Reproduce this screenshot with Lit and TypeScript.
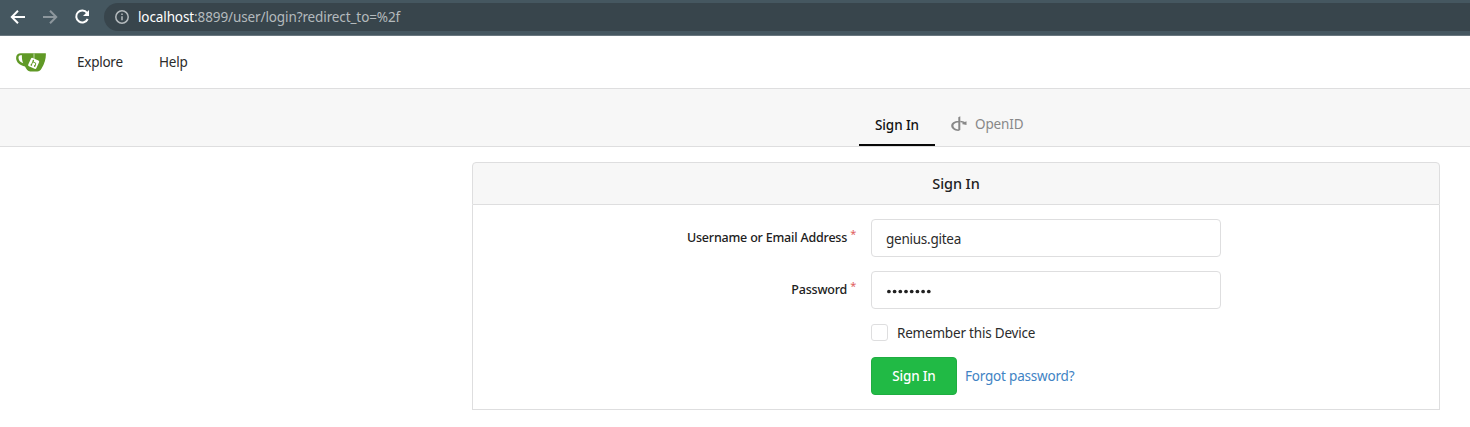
import { LitElement, html, svg, css } from "lit";
import { customElement } from "lit/decorators.js";

@customElement("app-root")
class AppRoot extends LitElement {
  static styles = css`
    :host {
      display: block;
      height: 427px;
      overflow: hidden;
      background: #fff;
      color: #2b2b2b;
      font: 13.5px/20px "Noto Sans", "Open Sans", sans-serif;
    }
    * { box-sizing: border-box; }
    svg { display: block; flex: none; }
    .browser {
      display: flex;
      align-items: flex-start;
      height: 36px;
      padding: 3px 0 0 8px;
      background: #455760;
      border-bottom: 1px solid #69777f;
    }
    .tools { width: 96px; height: 28px; }
    .address {
      display: flex;
      align-items: center;
      flex: 1;
      height: 28px;
      padding-left: 10px;
      border-radius: 14px 0 0 14px;
      background: #38454c;
      color: #b4babd;
      white-space: nowrap;
    }
    .url { margin-left: 8px; font-size: 13.5px; letter-spacing: -0.11px; }
    .host { color: #fff; }
    .nav {
      display: flex;
      height: 53px;
      padding: 16px 0 0 16px;
      border-bottom: 1px solid #dededf;
    }
    .explore { width: 82px; margin-left: 31px; letter-spacing: -0.25px; }
    .help { letter-spacing: -0.2px; }
    .tabs {
      display: flex;
      justify-content: flex-start;
      height: 58px;
      padding: 19px 0 0 859px;
      background: #f7f7f7;
      border-bottom: 1px solid #dededf;
    }
    .tab { display: flex; height: 38px; padding: 7px 16px 0; white-space: nowrap; }
    .tab.active { width: 76px; border-bottom: 2px solid #080808; color: #111; font-weight: 500; letter-spacing: -0.1px; }
    .tab.openid { height: 37px; padding-top: 6px; color: #888; gap: 8px; letter-spacing: -0.15px; }
    .panel { width: 968px; height: 248px; margin: 15px 0 0 472px; }
    .head {
      height: 43px;
      padding-top: 10px;
      border: 1px solid #dededf;
      border-radius: 4px 4px 0 0;
      background: #f7f7f7;
      color: #212121;
      text-align: center;
      font-size: 14.5px;
      font-weight: 500;
      letter-spacing: -0.1px;
    }
    .form {
      height: 205px;
      padding-top: 14px;
      border: 1px solid #dededf;
      border-top: 0;
    }
    .row { display: grid; grid-template-columns: 383px 350px; column-gap: 15px; height: 38px; margin-bottom: 14px; }
    .label { justify-self: end; display: flex; padding-top: 9px; color: #212121; font-size: 12.5px; font-weight: 500; letter-spacing: -0.2px; white-space: nowrap; }
    .star { margin: -4px 0 0 3px; color: #e06060; font-weight: 400; font-size: 11px; }
    .input { height: 38px; padding: 9px 14px; border: 1px solid #dededf; border-radius: 4px; letter-spacing: -0.25px; }
    .remember { display: flex; height: 20px; margin-left: 398px; letter-spacing: -0.2px; }
    .box { width: 17px; height: 17px; margin: 1px 9px 0 0; border: 1px solid #dededf; border-radius: 3px; }
    .actions { display: flex; margin: 14px 0 0 398px; }
    .submit {
      width: 86px;
      height: 38px;
      padding-top: 8px;
      border: 1px solid #1fad41;
      border-radius: 4px;
      background: #21ba45;
      color: #fff;
      text-align: center;
      font-weight: 500;
      letter-spacing: -0.2px;
    }
    .forgot { margin: 9px 0 0 8px; color: #4183c4; letter-spacing: -0.2px; }
  `;

  private field(label: string, input: unknown) {
    return html`<div class="row">
      <div class="label"><span>${label}</span><span class="star">*</span></div>
      ${input}
    </div>`;
  }

  render() {
    return html`
      <div class="browser">
        <svg class="tools" viewBox="0 0 96 28" fill="none" stroke-width="2">
          <path d="M17 14H4.500M10 7.800 3.800 14l6.200 6.200" stroke="#fff" />
          <path d="M35 14h12.500M42 7.800 48.200 14l-6.200 6.200" stroke="#8d979d" />
          <path d="M79 9.800A6 6 0 1 0 79.700 16" stroke="#fff" />
          <path d="M81 7v6h-6z" fill="#fff" />
        </svg>
        <div class="address">
          <svg width="16" height="16" viewBox="0 0 16 16" fill="none" stroke="#b4babd" stroke-width="1.500">
            <circle cx="8" cy="8" r="6.200" />
            <path d="M8 7.200v4M8 4.600v1.500" />
          </svg>
          <span class="url"><span class="host">localhost</span>:8899/user/login?redirect_to=%2f</span>
        </div>
      </div>
      <div class="nav">
        <svg class="logo" width="30" height="20" viewBox="0 0 30 20">
          <path d="M5 1.200h24.800c.4 3.600-.6 9.600-4.400 15.600-1.200 2-2.200 2.700-4.200 2.700h-7c-2.300 0-4-2.500-5.200-5C4 13.400.2 10.300.1 6.200 0 3.300 1.600 1.200 5 1.200zM4.500 3.200C3.100 3.300 2.400 4.400 2.500 6.100c.2 2.400 1.700 4.300 4.700 5.200C6.100 8.900 5.700 5.800 6 3.300 5.600 3.200 5 3.200 4.500 3.200z" fill="#609926" fill-rule="evenodd" />
          <path d="M18 1.500v5.500" stroke="#dce9d0" stroke-width=".8" />
          <rect x="13.200" y="6.800" width="8.900" height="9.100" rx="1.300" transform="rotate(25 17.600 11.400)" fill="#fff" />
          <g transform="rotate(25 17.600 11.400)" fill="none" stroke="#609926" stroke-width=".9">
            <path d="M16.200 8.200v6.200M16.200 10.300h2.600q1 0 1 1v2.600" />
          </g>
          <g transform="rotate(25 17.600 11.400)" fill="#609926">
            <circle cx="16.200" cy="9.200" r=".8" /><circle cx="16.200" cy="13.700" r=".8" /><circle cx="19.700" cy="13.200" r=".8" />
          </g>
        </svg>
        <span class="explore">Explore</span><span class="help">Help</span>
      </div>
      <div class="tabs">
        <div class="tab active">Sign In</div>
        <div class="tab openid">
          <svg width="16" height="20" viewBox="0 0 16 20">
            <path d="M7.300 3.300 9.300 2.200v13.700l-2 1.100C3.300 16.500.2 14.500.2 11.700.2 9 3.300 7 7.300 6.700v1.600c-2.900.3-4.900 1.600-4.900 3.400 0 1.900 2.100 3.300 4.900 3.700z" fill="#888" />
            <path d="M9.300 6.700c1.900.2 3.300.6 4.500 1.300l1.700-.8v3.900l-4.800-1.200 1.500-.8c-.8-.4-1.800-.7-2.900-.8z" fill="#888" />
          </svg>
          <span>OpenID</span>
        </div>
      </div>
      <div class="panel">
        <div class="head">Sign In</div>
        <div class="form">
          ${this.field("Username or Email Address", html`<div class="input">genius.gitea</div>`)}
          ${this.field("Password", html`<div class="input">
            <svg width="50" height="20" viewBox="0 0 50 20" fill="#212121">
              ${Array.from({ length: 8 }, (_, i) => svg`<circle cx=${2.9 + i * 5.7} cy="10.500" r="1.850" />`)}
            </svg>
          </div>`)}
          <div class="remember"><div class="box"></div><span>Remember this Device</span></div>
          <div class="actions"><div class="submit">Sign In</div><span class="forgot">Forgot password?</span></div>
        </div>
      </div>
    `;
  }
}
